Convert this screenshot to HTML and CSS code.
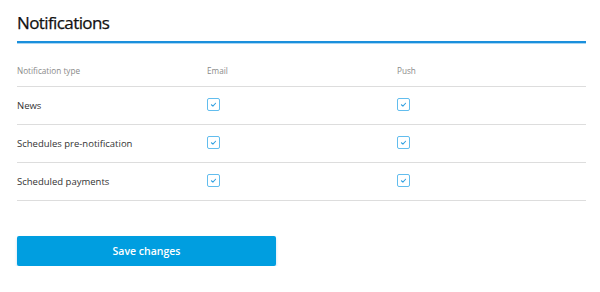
FILE: index.html
```html
<!DOCTYPE html>
<html>
<head>
<meta charset="utf-8">
<link rel="stylesheet" href="styles.css">
</head>
<body>
<div class="panel">
  <h1 class="title">Notifications</h1>
  <div class="table">
    <div class="row head">
      <div class="cell name">Notification type</div>
      <div class="cell">Email</div>
      <div class="cell">Push</div>
    </div>
    <div class="row">
      <div class="cell name">News</div>
      <div class="cell"><span class="cb"><svg viewBox="0 0 13 13"><path d="M4 6.8 L5.8 8.4 L9 5"/></svg></span></div>
      <div class="cell"><span class="cb"><svg viewBox="0 0 13 13"><path d="M4 6.8 L5.8 8.4 L9 5"/></svg></span></div>
    </div>
    <div class="row">
      <div class="cell name">Schedules pre-notification</div>
      <div class="cell"><span class="cb"><svg viewBox="0 0 13 13"><path d="M4 6.8 L5.8 8.4 L9 5"/></svg></span></div>
      <div class="cell"><span class="cb"><svg viewBox="0 0 13 13"><path d="M4 6.8 L5.8 8.4 L9 5"/></svg></span></div>
    </div>
    <div class="row">
      <div class="cell name">Scheduled payments</div>
      <div class="cell"><span class="cb"><svg viewBox="0 0 13 13"><path d="M4 6.8 L5.8 8.4 L9 5"/></svg></span></div>
      <div class="cell"><span class="cb"><svg viewBox="0 0 13 13"><path d="M4 6.8 L5.8 8.4 L9 5"/></svg></span></div>
    </div>
  </div>
  <button class="save">Save changes</button>
</div>
</body>
</html>
```
FILE: styles.css
```css
html, body {
  margin: 0;
  padding: 0;
  background: #ffffff;
}
body {
  font-family: "Open Sans", "Noto Sans", sans-serif;
  color: #333333;
}
.panel {
  width: 569px;
  padding: 10px 0 0 17px;
}
.title {
  margin: 0;
  font-size: 17px;
  font-weight: 400;
  letter-spacing: -0.6px;
  color: #111111;
  -webkit-text-stroke: 0.25px #111111;
  line-height: 26px;
  height: 31px;
  border-bottom: 2px solid #1a8fdc;
  box-shadow: 0 1px 0 #a9d6f3;
}
.table {
  display: flex;
  flex-direction: column;
}
.row {
  display: grid;
  grid-template-columns: 190px 190px 1fr;
  align-items: center;
  height: 37px;
  border-bottom: 1px solid #dddddd;
}
.row.head {
  height: 43px;
  align-items: end;
}
.row.head .cell {
  font-size: 8.2px;
  color: #8a8a8a;
  padding-bottom: 10px;
}
.cell {
  font-size: 9.5px;
  color: #333333;
}
.cb {
  display: block;
  width: 11px;
  height: 11px;
  border: 1px solid #62bdee;
  border-radius: 2px;
  margin-top: -3px;
}
.cb svg {
  display: block;
  width: 11px;
  height: 11px;
  margin: 0;
  fill: none;
  stroke: #2d9ee0;
  stroke-width: 1.2;
  stroke-linecap: round;
  stroke-linejoin: round;
}
.save {
  display: block;
  margin-top: 35px;
  width: 259px;
  height: 30px;
  border: none;
  border-radius: 2px;
  background: #009ee0;
  color: #ffffff;
  font-family: "Open Sans", "Noto Sans", sans-serif;
  font-size: 10.5px;
  font-weight: 600;
  box-shadow: 0 2px 3px rgba(0, 120, 200, 0.25);
  cursor: pointer;
}
```
